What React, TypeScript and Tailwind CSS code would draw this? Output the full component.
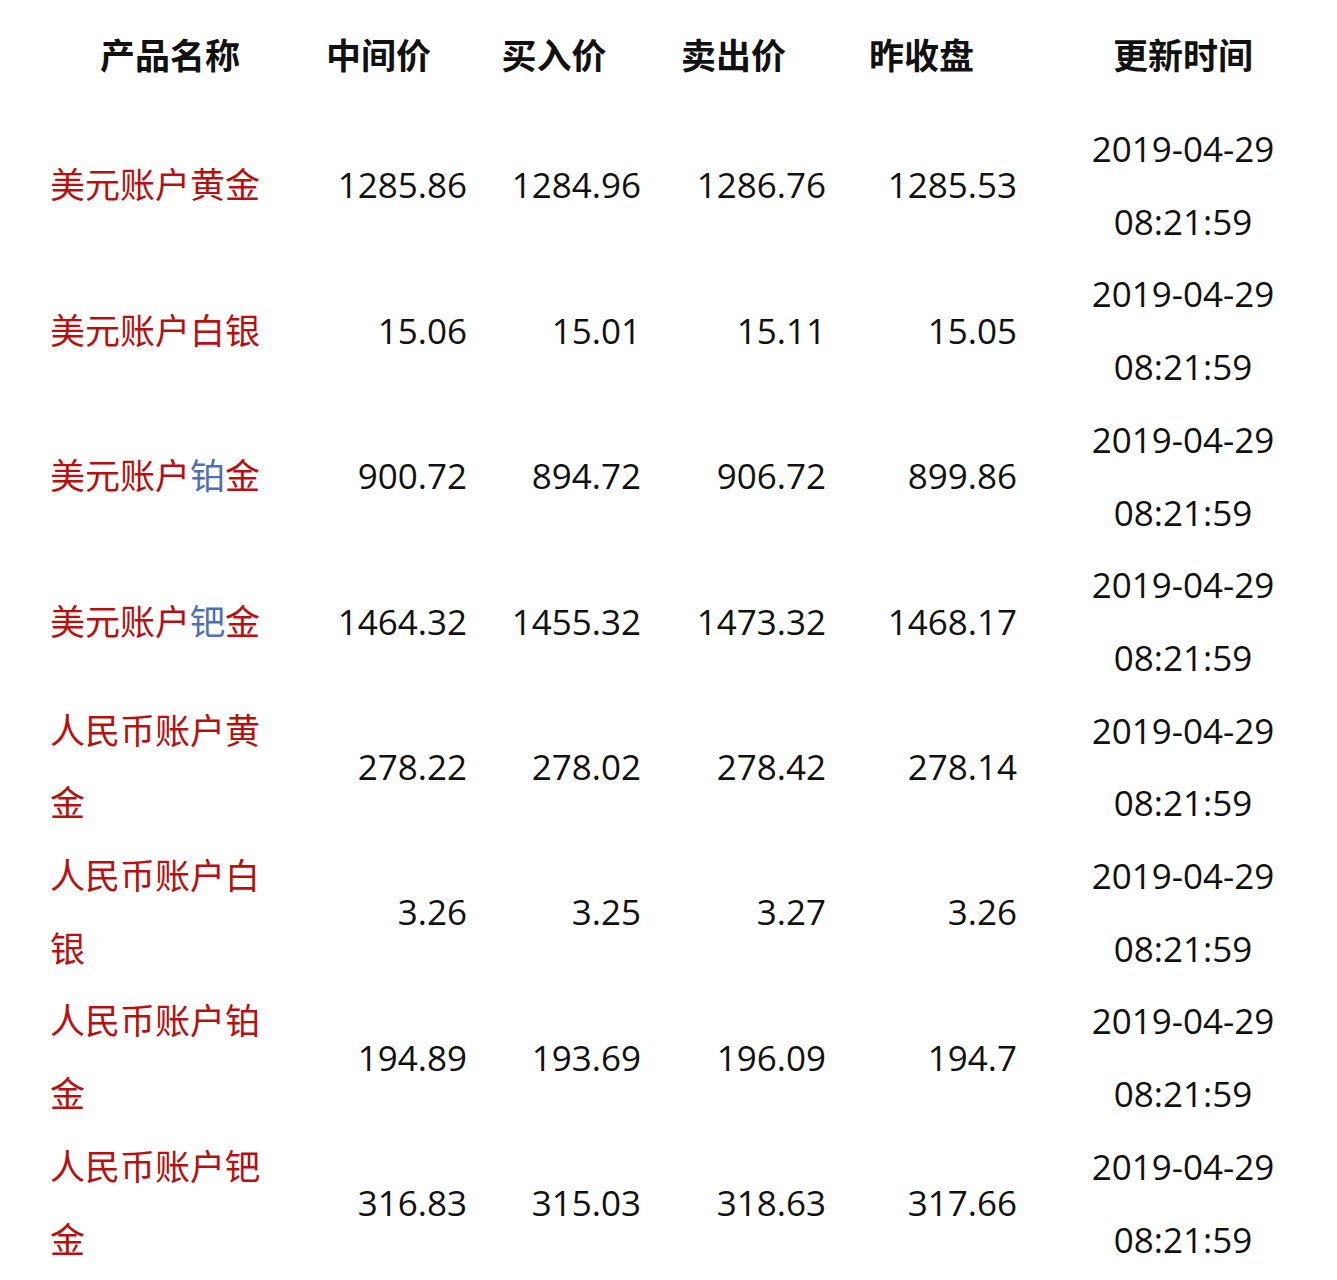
import React from 'react';

interface Row {
  name: React.ReactNode;
  mid: string;
  buy: string;
  sell: string;
  close: string;
}

const blue = (s: string) => <span className="text-[#4f6fae]">{s}</span>;

const rows: Row[] = [
  { name: '美元账户黄金', mid: '1285.86', buy: '1284.96', sell: '1286.76', close: '1285.53' },
  { name: '美元账户白银', mid: '15.06', buy: '15.01', sell: '15.11', close: '15.05' },
  { name: <>美元账户{blue('铂')}金</>, mid: '900.72', buy: '894.72', sell: '906.72', close: '899.86' },
  { name: <>美元账户{blue('钯')}金</>, mid: '1464.32', buy: '1455.32', sell: '1473.32', close: '1468.17' },
  { name: '人民币账户黄金', mid: '278.22', buy: '278.02', sell: '278.42', close: '278.14' },
  { name: '人民币账户白银', mid: '3.26', buy: '3.25', sell: '3.27', close: '3.26' },
  { name: '人民币账户铂金', mid: '194.89', buy: '193.69', sell: '196.09', close: '194.7' },
  { name: '人民币账户钯金', mid: '316.83', buy: '315.03', sell: '318.63', close: '317.66' },
];

export default function App() {
  return (
    <div className="min-h-screen bg-white font-['Open_Sans','Noto_Sans_CJK_SC',sans-serif] text-[35px] text-[#111]">
      <table className="ml-[50px] w-[1287px] table-fixed border-collapse">
        <colgroup>
          <col className="w-[240px]" />
          <col className="w-[177px]" />
          <col className="w-[174px]" />
          <col className="w-[185px]" />
          <col className="w-[191px]" />
          <col className="w-[320px]" />
        </colgroup>
        <thead>
          <tr className="h-[113px] font-bold">
            <th className="p-0 text-center">产品名称</th>
            <th className="p-0 text-center">中间价</th>
            <th className="p-0 text-center">买入价</th>
            <th className="p-0 text-center">卖出价</th>
            <th className="p-0 text-center">昨收盘</th>
            <th className="p-0 pl-[12px] text-center">更新时间</th>
          </tr>
        </thead>
        <tbody className="leading-[72.7px]">
          {rows.map((r, i) => (
            <tr key={i}>
              <td className="p-0 align-middle text-left text-[#b80f0f]">{r.name}</td>
              <td className="p-0 align-middle text-right">{r.mid}</td>
              <td className="p-0 align-middle text-right">{r.buy}</td>
              <td className="p-0 align-middle text-right">{r.sell}</td>
              <td className="p-0 align-middle text-right">{r.close}</td>
              <td className="p-0 pl-[12px] align-middle text-center">
                2019-04-29
                <br />
                08:21:59
              </td>
            </tr>
          ))}
        </tbody>
      </table>
    </div>
  );
}
